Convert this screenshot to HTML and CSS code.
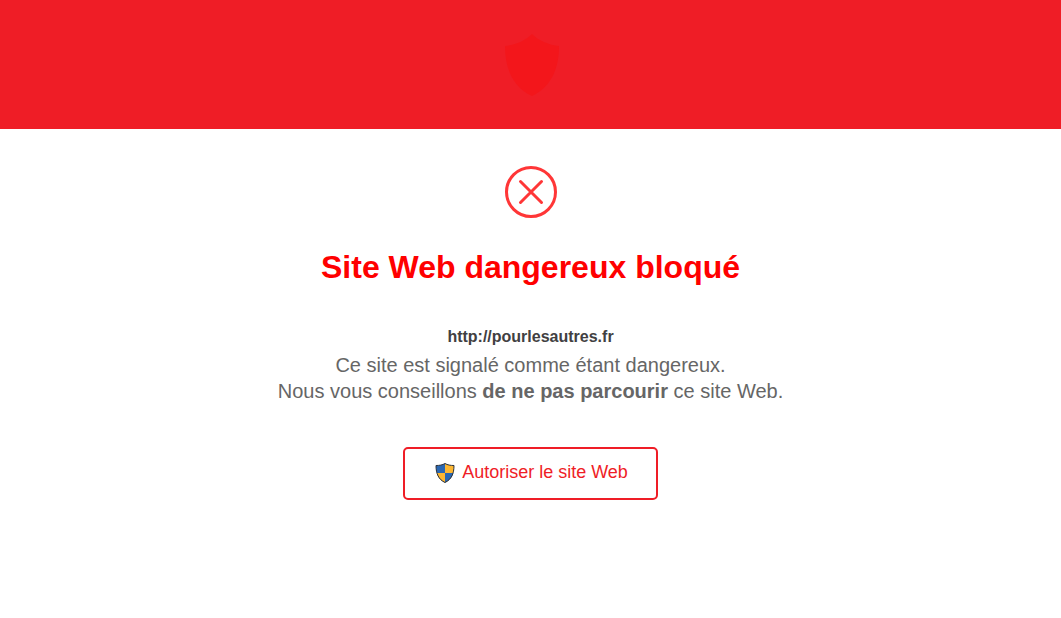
FILE: index.html
```
<!DOCTYPE html>
<html lang="fr">
<head>
    <meta charset="UTF-8">
    <meta name="viewport" content="width=device-width, initial-scale=1.0">
    <link rel="stylesheet" href="styles.css">
    <title>Site Web dangereux bloqué</title>
</head>
<body>
    <header class="header">
        <svg class="shield" viewBox="0 0 54 62" aria-hidden="true">
            <path d="M27 0C20 7 10 11 0 12C0 35 8 53 27 62C46 53 54 35 54 12C44 11 34 7 27 0Z" fill="#f3161b"/>
        </svg>
    </header>
    <main class="content">
        <svg class="cross" viewBox="0 0 52 52" aria-hidden="true">
            <circle cx="26" cy="26" r="24.500"/>
            <path d="M15.500 15.500L36.500 36.500M36.500 15.500L15.500 36.500"/>
        </svg>
        <h1>Site Web dangereux bloqué</h1>
        <p class="url">http://pourlesautres.fr</p>
        <p class="message">Ce site est signalé comme étant dangereux.<br>Nous vous conseillons <b>de ne pas parcourir</b> ce site Web.</p>
        <button class="allow" type="button">
            <svg class="uac" viewBox="0 1 20 20" aria-hidden="true">
                <path d="M10 1.500C7.500 3 4.500 3.500 1 3.500C1 11.500 3.500 17.500 10 20.500V1.500Z" fill="#2a67b2"/>
                <path d="M10 1.500C12.500 3 15.500 3.500 19 3.500C19 11.500 16.500 17.500 10 20.500V1.500Z" fill="#fdb731"/>
                <path d="M1.700 11H10V20.500C5.500 18.500 2.700 15 1.700 11Z" fill="#fdb731"/>
                <path d="M18.300 11H10V20.500C14.500 18.500 17.300 15 18.300 11Z" fill="#2a67b2"/>
                <path d="M10 1.500C7.500 3 4.500 3.500 1 3.500C1 11.500 3.500 17.500 10 20.500C16.500 17.500 19 11.500 19 3.500C15.500 3.500 12.500 3 10 1.500Z" fill="none" stroke="#2b3038"/>
            </svg>
            Autoriser le site Web
        </button>
    </main>
</body>
</html>
```
FILE: styles.css
```
*{
    box-sizing: border-box;
}
body{
    margin: 0;
    background: white;
    font-family: "Liberation Sans", Arial, sans-serif;
}
.header{
    padding: 34px 0 33px 3px;
    background: #ef1d26;
    text-align: center;
}
.shield{
    display: block;
    width: 54px;
    height: 62px;
    margin: 0 auto;
}
.content{
    display: flex;
    flex-direction: column;
    align-items: center;
    padding: 37px 16px;
    text-align: center;
}
.cross{
    width: 52px;
    height: 52px;
    fill: none;
    stroke: #ff3637;
    stroke-width: 3;
    stroke-linecap: round;
}
h1{
    margin: 29px 0 40px;
    font-size: 32px;
    line-height: 40px;
    color: #ff0000;
}
.url{
    margin: 0 0 5px;
    font-size: 16px;
    line-height: 20px;
    font-weight: bold;
    color: #414042;
}
.message{
    margin: 0 0 43px;
    font-size: 20px;
    line-height: 26px;
    color: #666666;
}
.allow{
    display: flex;
    align-items: center;
    gap: 7px;
    height: 53px;
    padding: 0 28px 2px 30px;
    border: 2px solid #ef1d26;
    border-radius: 5px;
    background: white;
    font-family: inherit;
    font-size: 18px;
    color: #ef1d26;
    cursor: pointer;
}
.uac{
    width: 20px;
    height: 20px;
}
```
